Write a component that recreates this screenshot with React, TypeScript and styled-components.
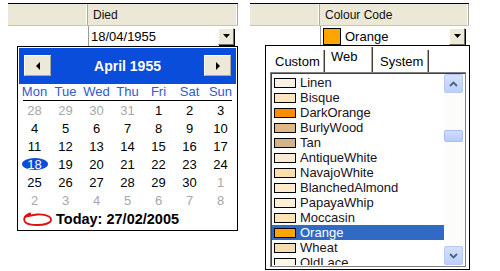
import React from "react";
import styled, { createGlobalStyle } from "styled-components";

const Global = createGlobalStyle`
  html, body { margin: 0; padding: 0; background: #fff; }
  body { font-family: "Liberation Sans", Arial, sans-serif; width: 500px; height: 271px; overflow: hidden; }
`;

const Page = styled.div`
  display: flex;
  align-items: flex-start;
  padding-left: 8px;
  gap: 12px;
`;

const Panel = styled.div<{ $w: number }>`
  position: relative;
  width: ${(p) => p.$w}px;
  padding-top: 3px;
  height: 268px;
`;

const HeaderRow = styled.div`
  display: flex;
  height: 21px;
  border-top: 1px solid #000;
  border-bottom: 1px solid #c9c5b5;
  background: #ebe8d7;
`;

const HeaderCell = styled.div<{ $w?: number }>`
  ${(p) => (p.$w ? `width: ${p.$w}px;` : "flex: 1;")}
  display: flex;
  align-items: center;
  padding-left: 5px;
  font-size: 12px;
  color: #111;
  border-right: 1px solid #aca899;
  box-shadow: inset -1px 0 0 #fff;
  box-sizing: border-box;
`;

const BodyRow = styled.div`
  display: flex;
  height: 20px;
`;

const BlankCell = styled.div<{ $w: number }>`
  width: ${(p) => p.$w}px;
`;

const EditorCell = styled.div`
  flex: 1;
  display: flex;
  align-items: center;
  border-left: 1px solid #9c9a8c;
  padding-left: 2px;
  padding-right: 4px;
  font-size: 13px;
  color: #000;
  gap: 4px;
`;

const EditorText = styled.span`
  flex: 1;
`;

const DropButton = styled.div`
  width: 16px;
  height: 17px;
  box-sizing: border-box;
  background: #ece9d8;
  border-top: 1px solid #fff;
  border-left: 1px solid #fff;
  border-right: 1px solid #716f64;
  border-bottom: 1px solid #716f64;
  box-shadow: 1px 1px 0 #000;
  display: flex;
  align-items: center;
  justify-content: center;
`;

const Swatch = styled.div<{ $c: string; $w: number; $h: number }>`
  width: ${(p) => p.$w}px;
  height: ${(p) => p.$h}px;
  box-sizing: border-box;
  background: ${(p) => p.$c};
  border: 1px solid #000;
  flex-shrink: 0;
`;

/* Calendar popup */
const CalPopup = styled.div`
  position: absolute;
  left: 9px;
  top: 46px;
  width: 221px;
  height: 185px;
  box-sizing: border-box;
  border: 1px solid #000;
  padding: 1px;
  background: #fff;
  display: flex;
  flex-direction: column;
`;

const CalHeader = styled.div`
  height: 36px;
  background: #0a4ddb;
  display: flex;
  align-items: center;
  justify-content: space-between;
  padding: 0 5px;
`;

const NavButton = styled.div`
  width: 27px;
  height: 21px;
  box-sizing: border-box;
  background: #ece9d8;
  border-top: 1px solid #fff;
  border-left: 1px solid #fff;
  border-right: 1px solid #aca899;
  border-bottom: 1px solid #aca899;
  display: flex;
  align-items: center;
  justify-content: center;
`;

const MonthTitle = styled.div`
  color: #fff;
  font-weight: bold;
  font-size: 14px;
`;

const Grid = styled.div`
  display: grid;
  grid-template-columns: repeat(7, 31px);
`;

const DayNames = styled(Grid)`
  height: 17px;
  align-items: center;
`;

const Underline = styled.div`
  height: 1px;
  background: #000;
  margin: 0 4px;
`;

const DayName = styled.div`
  text-align: center;
  font-size: 13px;
  color: #2e5bd0;
`;

const DayGrid = styled(Grid)`
  grid-auto-rows: 18px;
`;

const DayCell = styled.div<{ $muted?: boolean; $sel?: boolean }>`
  display: flex;
  align-items: center;
  justify-content: center;
  font-size: 13px;
  color: ${(p) => (p.$sel ? "#fff" : p.$muted ? "#a8a8a8" : "#000")};
`;

const SelMark = styled.span`
  background: #0a4ddb;
  border-radius: 50%;
  width: 26px;
  height: 12px;
  display: flex;
  align-items: center;
  justify-content: center;
`;

const TodayRow = styled.div`
  display: flex;
  align-items: center;
  height: 20px;
  padding-left: 3px;
  gap: 3px;
  font-weight: bold;
  font-size: 14.5px;
  color: #000;
`;

/* Colour popup */
const ColPopup = styled.div`
  position: absolute;
  left: 15px;
  top: 45px;
  width: 205px;
  height: 225px;
  box-sizing: border-box;
  border: 1px solid #000;
  background: #fff;
  display: flex;
  flex-direction: column;
  padding: 0 3px 2px 4px;
`;

const TabStrip = styled.div`
  display: flex;
  align-items: flex-end;
  height: 26px;
`;

const Tab = styled.div<{ $active?: boolean; $w: number; $pl: number }>`
  width: ${(p) => p.$w}px;
  height: ${(p) => (p.$active ? 25 : 22)}px;
  box-sizing: border-box;
  padding-left: ${(p) => p.$pl}px;
  display: flex;
  align-items: ${(p) => (p.$active ? "flex-start" : "center")};
  padding-top: ${(p) => (p.$active ? 2 : 0)}px;
  font-size: 13px;
  color: #000;
  background: #fff;
  border-right: 1px solid #404040;
  box-shadow: inset -1px 0 0 #aca899;
`;

const ListBox = styled.div`
  flex: 1;
  border: 1px solid #7f7f7f;
  box-shadow: inset 1px 1px 0 #404040;
  display: flex;
  padding: 1px 2px 1px 1px;
  overflow: hidden;
`;

const Items = styled.div`
  flex: 1;
  display: flex;
  flex-direction: column;
  padding-top: 1px;
  overflow: hidden;
`;

const Item = styled.div<{ $sel?: boolean }>`
  height: 15px;
  flex-shrink: 0;
  display: flex;
  align-items: center;
  gap: 4px;
  padding-left: 2px;
  font-size: 13px;
  color: ${(p) => (p.$sel ? "#fff" : "#201020")};
  background: ${(p) => (p.$sel ? "#316ac5" : "transparent")};
`;

const ScrollBar = styled.div`
  width: 19px;
  display: flex;
  flex-direction: column;
  background: #fcfcfa;
`;

const ScrollBtn = styled.div`
  height: 19px;
  box-sizing: border-box;
  border: 1px solid #b6c9f5;
  border-radius: 2px;
  background: linear-gradient(#d4e0fd, #bcd0fa);
  display: flex;
  align-items: center;
  justify-content: center;
  flex-shrink: 0;
`;

const Track = styled.div`
  flex: 1;
  display: flex;
  flex-direction: column;
  padding-top: 37px;
`;

const Thumb = styled.div`
  height: 12px;
  box-sizing: border-box;
  border: 1px solid #a8bff3;
  border-radius: 2px;
  background: linear-gradient(#d0defd, #b6cbf9);
`;

const Tri = ({ dir }: { dir: "down" | "left" | "right" }) => {
  const pts =
    dir === "down" ? "0,0 7,0 3.5,4" : dir === "left" ? "4,0 4,8 0,4" : "0,0 0,8 4,4";
  const w = dir === "down" ? 7 : 4;
  const h = dir === "down" ? 4 : 8;
  return (
    <svg width={w} height={h} viewBox={`0 0 ${w} ${h}`}>
      <polygon points={pts} fill="#000" />
    </svg>
  );
};

const Chevron = ({ up }: { up?: boolean }) => (
  <svg width="9" height="6" viewBox="0 0 9 6">
    <polyline
      points={up ? "1,5 4.5,1.5 8,5" : "1,1 4.5,4.5 8,1"}
      fill="none"
      stroke="#4d6185"
      strokeWidth="1.8"
    />
  </svg>
);

const TodayMark = () => (
  <svg width="31" height="15" viewBox="0 0 31 15">
    <path
      d="M9 1.5 C 3 2.5, 0.5 7, 3.5 10.5 C 8 14, 24 14, 28.5 9.5 C 31 5.5, 25 2, 15 2.5 C 11 2.8, 7 4, 2 5"
      fill="none"
      stroke="#e01010"
      strokeWidth="1.8"
    />
  </svg>
);

const days: { n: number; m?: boolean }[] = [
  ...[28, 29, 30, 31].map((n) => ({ n, m: true })),
  ...Array.from({ length: 30 }, (_, i) => ({ n: i + 1 })),
  ...[1, 2, 3, 4, 5, 6, 7, 8].map((n) => ({ n, m: true })),
];

const colours: [string, string][] = [
  ["Linen", "#FAF0E6"],
  ["Bisque", "#FFE4C4"],
  ["DarkOrange", "#FF8C00"],
  ["BurlyWood", "#DEB887"],
  ["Tan", "#D2B48C"],
  ["AntiqueWhite", "#FAEBD7"],
  ["NavajoWhite", "#FFDEAD"],
  ["BlanchedAlmond", "#FFEBCD"],
  ["PapayaWhip", "#FFEFD5"],
  ["Moccasin", "#FFE4B5"],
  ["Orange", "#FFA500"],
  ["Wheat", "#F5DEB3"],
  ["OldLace", "#FDF5E6"],
];

export default function App() {
  return (
    <>
      <Global />
      <Page>
        <Panel $w={230}>
          <HeaderRow>
            <HeaderCell $w={80} />
            <HeaderCell>Died</HeaderCell>
          </HeaderRow>
          <BodyRow>
            <BlankCell $w={80} />
            <EditorCell>
              <EditorText>18/04/1955</EditorText>
              <DropButton>
                <Tri dir="down" />
              </DropButton>
            </EditorCell>
          </BodyRow>
          <CalPopup>
            <CalHeader>
              <NavButton>
                <Tri dir="left" />
              </NavButton>
              <MonthTitle>April 1955</MonthTitle>
              <NavButton>
                <Tri dir="right" />
              </NavButton>
            </CalHeader>
            <DayNames>
              {["Mon", "Tue", "Wed", "Thu", "Fri", "Sat", "Sun"].map((d) => (
                <DayName key={d}>{d}</DayName>
              ))}
            </DayNames>
            <Underline />
            <DayGrid>
              {days.map((d, i) => (
                <DayCell key={i} $muted={d.m} $sel={!d.m && d.n === 18}>
                  {!d.m && d.n === 18 ? <SelMark>18</SelMark> : d.n}
                </DayCell>
              ))}
            </DayGrid>
            <TodayRow>
              <TodayMark />
              Today: 27/02/2005
            </TodayRow>
          </CalPopup>
        </Panel>
        <Panel $w={219}>
          <HeaderRow>
            <HeaderCell $w={70} />
            <HeaderCell>Colour Code</HeaderCell>
          </HeaderRow>
          <BodyRow>
            <BlankCell $w={70} />
            <EditorCell>
              <Swatch $c="#FFA500" $w={18} $h={17} />
              <EditorText>Orange</EditorText>
              <DropButton>
                <Tri dir="down" />
              </DropButton>
            </EditorCell>
          </BodyRow>
          <ColPopup>
            <TabStrip>
              <Tab $w={55} $pl={5}>Custom</Tab>
              <Tab $w={48} $pl={6} $active>Web</Tab>
              <Tab $w={56} $pl={7}>System</Tab>
            </TabStrip>
            <ListBox>
              <Items>
                {colours.map(([name, c]) => (
                  <Item key={name} $sel={name === "Orange"}>
                    <Swatch $c={c} $w={22} $h={10} />
                    {name}
                  </Item>
                ))}
              </Items>
              <ScrollBar>
                <ScrollBtn>
                  <Chevron up />
                </ScrollBtn>
                <Track>
                  <Thumb />
                </Track>
                <ScrollBtn>
                  <Chevron />
                </ScrollBtn>
              </ScrollBar>
            </ListBox>
          </ColPopup>
        </Panel>
      </Page>
    </>
  );
}
